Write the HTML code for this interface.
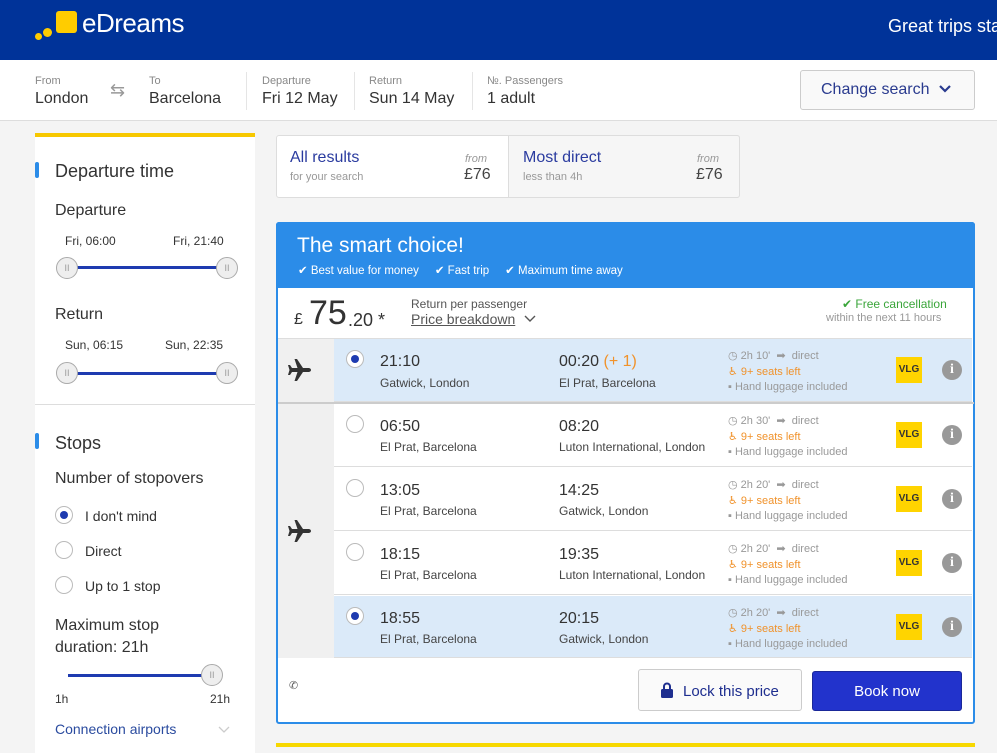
<!DOCTYPE html>
<html><head><meta charset="utf-8"><style>
*{margin:0;padding:0;box-sizing:border-box}
body{width:997px;height:747px;overflow:hidden;background:#f4f4f4;font-family:"Liberation Sans","DejaVu Sans",sans-serif;color:#333;position:relative}
.a{position:absolute;white-space:nowrap}
.lbl{font-size:11px;color:#888}
.val{font-size:16px;color:#333}
.rad{position:absolute;width:18px;height:18px;border:1px solid #bbb;border-radius:50%;background:#fff}
.rad.on::after{content:"";position:absolute;left:4px;top:4px;width:8px;height:8px;border-radius:50%;background:#1e3bb0}
.thumb{position:absolute;width:22px;height:22px;border:1px solid #aaa;border-radius:50%;background:#eee;font-size:9px;color:#999;text-align:center;line-height:20px}
.bar{position:absolute;height:3px;background:#1e3bb0}
.row{position:absolute;left:334px;width:638px;height:63px;border-bottom:1px solid #ddd;background:#fff}
.row.sel{background:#dbeaf9}
.t{position:absolute;font-size:16px;color:#333}
.s{position:absolute;font-size:12px;color:#444}
.i{position:absolute;font-size:11px;color:#999;left:394px}
.vlg{position:absolute;left:562px;top:18px;width:26px;height:26px;background:#ffd400;font-size:10px;font-weight:bold;color:#333;text-align:center;line-height:26px}
.inf{position:absolute;left:608px;top:21px;width:20px;height:20px;border-radius:50%;background:#999;color:#fff;font-size:14px;font-weight:bold;text-align:center;line-height:20px;font-family:"Liberation Serif",serif}
</style></head><body>
<!-- header -->
<div class="a" style="left:0;top:0;width:997px;height:60px;background:#003399"></div>
<div class="a" style="left:35px;top:33px;width:7px;height:7px;border-radius:50%;background:#ffcc00"></div>
<div class="a" style="left:43px;top:28px;width:9px;height:9px;border-radius:50%;background:#ffcc00"></div>
<div class="a" style="left:56px;top:11px;width:21px;height:22px;border-radius:3px;background:#ffcc00"></div>
<div class="a" style="left:82px;top:8px;font-size:26px;color:#fff;letter-spacing:-0.5px">eDreams</div>
<div class="a" style="left:888px;top:16px;font-size:18px;color:#fff">Great trips sta</div>
<!-- search bar -->
<div class="a" style="left:0;top:60px;width:997px;height:61px;background:#fff;border-bottom:1px solid #ddd"></div>
<div class="a lbl" style="left:35px;top:75px">From</div><div class="a val" style="left:35px;top:90px">London</div>
<div class="a" style="left:110px;top:80px;font-size:18px;color:#999">⇆</div>
<div class="a lbl" style="left:149px;top:75px">To</div><div class="a val" style="left:149px;top:90px">Barcelona</div>
<div class="a" style="left:246px;top:72px;width:1px;height:38px;background:#e5e5e5"></div>
<div class="a lbl" style="left:262px;top:75px">Departure</div><div class="a val" style="left:262px;top:90px">Fri 12 May</div>
<div class="a" style="left:354px;top:72px;width:1px;height:38px;background:#e5e5e5"></div>
<div class="a lbl" style="left:369px;top:75px">Return</div><div class="a val" style="left:369px;top:90px">Sun 14 May</div>
<div class="a" style="left:472px;top:72px;width:1px;height:38px;background:#e5e5e5"></div>
<div class="a lbl" style="left:487px;top:75px">№. Passengers</div><div class="a val" style="left:487px;top:90px">1 adult</div>
<div class="a" style="left:800px;top:70px;width:175px;height:40px;border:1px solid #ccc;border-radius:3px;background:#f9f9f9;font-size:16px;color:#2a3b8f;padding:10px 0 0 20px">Change search <svg width="14" height="10" viewBox="0 0 14 10" style="margin-left:4px"><path d="M2 2l5 5 5-5" stroke="#2a3b8f" stroke-width="2.2" fill="none"/></svg></div>
<!-- sidebar -->
<div class="a" style="left:35px;top:133px;width:220px;height:620px;background:#fff;border-top:4px solid #f7c800"></div>
<div class="a" style="left:35px;top:162px;width:4px;height:16px;background:#2b8ce8;border-radius:2px"></div>
<div class="a" style="left:55px;top:161px;font-size:18px">Departure time</div>
<div class="a" style="left:55px;top:202px;font-size:16px">Departure</div>
<div class="a" style="left:65px;top:234px;font-size:12px">Fri, 06:00</div><div class="a" style="left:173px;top:234px;font-size:12px">Fri, 21:40</div>
<div class="bar" style="left:66px;top:266px;width:160px"></div>
<div class="thumb" style="left:56px;top:257px">II</div><div class="thumb" style="left:216px;top:257px">II</div>
<div class="a" style="left:55px;top:306px;font-size:16px">Return</div>
<div class="a" style="left:65px;top:338px;font-size:12px">Sun, 06:15</div><div class="a" style="left:165px;top:338px;font-size:12px">Sun, 22:35</div>
<div class="bar" style="left:66px;top:372px;width:160px"></div>
<div class="thumb" style="left:56px;top:362px">II</div><div class="thumb" style="left:216px;top:362px">II</div>
<div class="a" style="left:35px;top:404px;width:220px;height:1px;background:#ddd"></div>
<div class="a" style="left:35px;top:433px;width:4px;height:16px;background:#2b8ce8;border-radius:2px"></div>
<div class="a" style="left:55px;top:433px;font-size:18px">Stops</div>
<div class="a" style="left:55px;top:470px;font-size:16px">Number of stopovers</div>
<div class="rad on" style="left:55px;top:506px"></div><div class="a" style="left:85px;top:508px;font-size:14px">I don't mind</div>
<div class="rad" style="left:55px;top:541px"></div><div class="a" style="left:85px;top:543px;font-size:14px">Direct</div>
<div class="rad" style="left:55px;top:576px"></div><div class="a" style="left:85px;top:578px;font-size:14px">Up to 1 stop</div>
<div class="a" style="left:55px;top:615px;font-size:16px;line-height:22px">Maximum stop<br>duration: 21h</div>
<div class="bar" style="left:68px;top:674px;width:140px"></div>
<div class="thumb" style="left:201px;top:664px">II</div>
<div class="a" style="left:55px;top:692px;font-size:12px">1h</div><div class="a" style="left:210px;top:692px;font-size:12px">21h</div>
<div class="a" style="left:55px;top:721px;font-size:14px;color:#2a4b9f">Connection airports</div>
<svg class="a" style="left:218px;top:726px" width="12" height="8" viewBox="0 0 12 8"><path d="M1 1l5 5 5-5" stroke="#ccc" stroke-width="1.3" fill="none"/></svg>
<!-- tabs -->
<div class="a" style="left:276px;top:135px;width:464px;height:63px;border:1px solid #ddd;border-radius:3px;background:#fff"></div>
<div class="a" style="left:508px;top:135px;width:232px;height:63px;border:1px solid #ddd;border-radius:0 3px 3px 0;background:#f6f6f6"></div>
<div class="a" style="left:290px;top:149px;font-size:16px;color:#2a3b9f">All results</div>
<div class="a" style="left:290px;top:171px;font-size:11px;color:#999">for your search</div>
<div class="a" style="left:465px;top:153px;font-size:11px;color:#999;font-style:italic">from</div>
<div class="a" style="left:464px;top:166px;font-size:16px;color:#444">£76</div>
<div class="a" style="left:523px;top:149px;font-size:16px;color:#2a3b9f">Most direct</div>
<div class="a" style="left:523px;top:171px;font-size:11px;color:#999">less than 4h</div>
<div class="a" style="left:697px;top:153px;font-size:11px;color:#999;font-style:italic">from</div>
<div class="a" style="left:696px;top:166px;font-size:16px;color:#444">£76</div>
<!-- card -->
<div class="a" style="left:276px;top:222px;width:699px;height:502px;border:2px solid #2b8ce8;border-radius:3px;background:#fff"></div>
<div class="a" style="left:276px;top:222px;width:699px;height:66px;background:#2b8ce8;border-radius:3px 3px 0 0"></div>
<div class="a" style="left:297px;top:234px;font-size:21px;color:#fff">The smart choice!</div>
<div class="a" style="left:298px;top:263px;font-size:11.5px;color:#fff">✔ Best value for money &nbsp;&nbsp;&nbsp; ✔ Fast trip &nbsp;&nbsp;&nbsp; ✔ Maximum time away</div>
<div class="a" style="left:294px;top:311px;font-size:16px">£</div>
<div class="a" style="left:309px;top:294px;font-size:34px">75</div>
<div class="a" style="left:348px;top:310px;font-size:18px">.20 *</div>
<div class="a" style="left:411px;top:297px;font-size:12px;color:#555">Return per passenger</div>
<div class="a" style="left:411px;top:311px;font-size:14px;color:#555;text-decoration:underline">Price breakdown</div>
<svg class="a" style="left:524px;top:315px" width="12" height="8" viewBox="0 0 12 8"><path d="M1 1l5 5 5-5" stroke="#555" stroke-width="1.4" fill="none"/></svg>
<div class="a" style="left:842px;top:297px;font-size:12px;color:#3aa53a">✔ Free cancellation</div>
<div class="a" style="left:826px;top:312px;font-size:11px;color:#999">within the next 11 hours</div>
<div class="a" style="left:278px;top:338px;width:56px;height:64px;background:#f0f0f0;border-top:1px solid #ddd"></div>
<div class="a" style="left:278px;top:404px;width:56px;height:254px;background:#f0f0f0"></div>
<svg class="a" style="left:288px;top:359px" width="24" height="22" viewBox="0 0 24 22"><path d="M23 11c0-1.2-1.2-2-2.5-2H15L9 0H6.5l3 9H4L2 6H0l1.5 5L0 16h2l2-3h5.5l-3 9H9l6-9h5.5c1.3 0 2.5-.8 2.5-2z" fill="#333"/></svg>
<svg class="a" style="left:288px;top:520px" width="24" height="22" viewBox="0 0 24 22"><path d="M23 11c0-1.2-1.2-2-2.5-2H15L9 0H6.5l3 9H4L2 6H0l1.5 5L0 16h2l2-3h5.5l-3 9H9l6-9h5.5c1.3 0 2.5-.8 2.5-2z" fill="#333"/></svg>
<div class="a" style="left:278px;top:402px;width:696px;height:2px;background:#ccc"></div>

<div class="row sel" style="top:338px;height:64px;border-top:1px solid #ddd">
<div class="rad on" style="left:12px;top:11px"></div>
<div class="t" style="left:46px;top:14px">21:10</div><div class="s" style="left:46px;top:37px">Gatwick, London</div>
<div class="t" style="left:225px;top:14px">00:20 <span style="color:#f0922b">(+ 1)</span></div><div class="s" style="left:225px;top:37px">El Prat, Barcelona</div>
<div class="i" style="top:10px">◷ 2h 10' &nbsp;➡ &nbsp;direct</div><div class="i" style="top:26px;color:#f0922b">♿ 9+ seats left</div><div class="i" style="top:42px">▪ Hand luggage included</div>
<div class="vlg">VLG</div><div class="inf">i</div></div>

<div class="row" style="top:404px">
<div class="rad" style="left:12px;top:11px"></div>
<div class="t" style="left:46px;top:14px">06:50</div><div class="s" style="left:46px;top:36px">El Prat, Barcelona</div>
<div class="t" style="left:225px;top:14px">08:20</div><div class="s" style="left:225px;top:36px">Luton International, London</div>
<div class="i" style="top:10px">◷ 2h 30' &nbsp;➡ &nbsp;direct</div><div class="i" style="top:26px;color:#f0922b">♿ 9+ seats left</div><div class="i" style="top:42px">▪ Hand luggage included</div>
<div class="vlg">VLG</div><div class="inf">i</div></div>

<div class="row" style="top:468px">
<div class="rad" style="left:12px;top:11px"></div>
<div class="t" style="left:46px;top:14px">13:05</div><div class="s" style="left:46px;top:36px">El Prat, Barcelona</div>
<div class="t" style="left:225px;top:14px">14:25</div><div class="s" style="left:225px;top:36px">Gatwick, London</div>
<div class="i" style="top:10px">◷ 2h 20' &nbsp;➡ &nbsp;direct</div><div class="i" style="top:26px;color:#f0922b">♿ 9+ seats left</div><div class="i" style="top:42px">▪ Hand luggage included</div>
<div class="vlg">VLG</div><div class="inf">i</div></div>

<div class="row" style="top:532px">
<div class="rad" style="left:12px;top:11px"></div>
<div class="t" style="left:46px;top:14px">18:15</div><div class="s" style="left:46px;top:36px">El Prat, Barcelona</div>
<div class="t" style="left:225px;top:14px">19:35</div><div class="s" style="left:225px;top:36px">Luton International, London</div>
<div class="i" style="top:10px">◷ 2h 20' &nbsp;➡ &nbsp;direct</div><div class="i" style="top:26px;color:#f0922b">♿ 9+ seats left</div><div class="i" style="top:42px">▪ Hand luggage included</div>
<div class="vlg">VLG</div><div class="inf">i</div></div>

<div class="row sel" style="top:596px;height:62px">
<div class="rad on" style="left:12px;top:11px"></div>
<div class="t" style="left:46px;top:14px">18:55</div><div class="s" style="left:46px;top:36px">El Prat, Barcelona</div>
<div class="t" style="left:225px;top:14px">20:15</div><div class="s" style="left:225px;top:36px">Gatwick, London</div>
<div class="i" style="top:10px">◷ 2h 20' &nbsp;➡ &nbsp;direct</div><div class="i" style="top:26px;color:#f0922b">♿ 9+ seats left</div><div class="i" style="top:42px">▪ Hand luggage included</div>
<div class="vlg">VLG</div><div class="inf">i</div></div>

<div class="a" style="left:289px;top:679px;font-size:11px;color:#555">✆</div>
<div class="a" style="left:638px;top:669px;width:164px;height:42px;border:1px solid #ccc;border-radius:3px;background:#fafafa;font-size:15px;color:#1e2e8f;padding:12px 0 0 22px"><svg width="12" height="16" viewBox="0 0 12 16" style="margin-right:10px;vertical-align:-2px"><path d="M3 7V4.5a3 3 0 0 1 6 0V7" stroke="#1e2e8f" stroke-width="2" fill="none"/><rect x="0" y="7" width="12" height="9" rx="1.5" fill="#1e2e8f"/></svg>Lock this price</div>
<div class="a" style="left:812px;top:671px;width:150px;height:40px;background:#2233cc;border:1px solid #1a2899;border-radius:3px;color:#fff;font-size:15px;text-align:center;line-height:40px">Book now</div>
<div class="a" style="left:276px;top:743px;width:699px;height:4px;background:#f7d800"></div>
</body></html>
